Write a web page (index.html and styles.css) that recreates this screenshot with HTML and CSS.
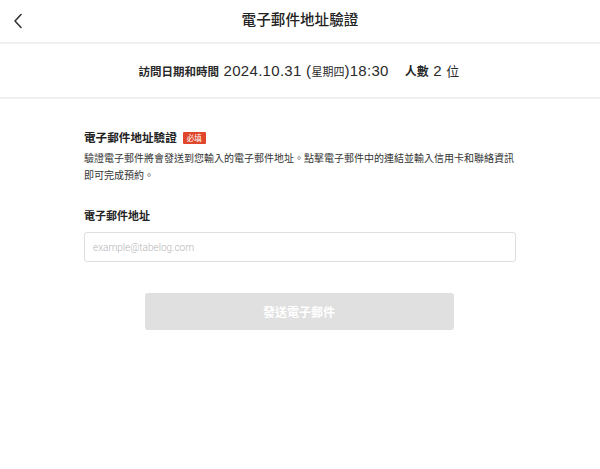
FILE: index.html
```html
<!DOCTYPE html>
<html lang="zh-Hant">
<head>
<meta charset="utf-8">
<title>電子郵件地址驗證</title>
<link rel="stylesheet" href="styles.css">
</head>
<body>
<header class="topbar">
  <button class="back" aria-label="返回">
    <svg width="10" height="16" viewBox="0 0 10 16"><path d="M8 1.5 L2 8 L8 14.5" fill="none" stroke="#333" stroke-width="1.6" stroke-linecap="round" stroke-linejoin="round"/></svg>
  </button>
  <h1 class="title">電子郵件地址驗證</h1>
</header>
<section class="visit">
  <p class="visit-line"><span class="cjk b">訪問日期和時間</span> 2024.10.31 (<span class="cjk wk">星期四</span>)18:30<span class="gap"></span><span class="cjk b ppl">人數</span> 2 <span class="cjk unit">位</span></p>
</section>
<main class="content">
  <div class="sec-head">
    <h2 class="sec-title">電子郵件地址驗證</h2>
    <span class="badge">必填</span>
  </div>
  <p class="desc">驗證電子郵件將會發送到您輸入的電子郵件地址。點擊電子郵件中的連結並輸入信用卡和聯絡資訊即可完成預約。</p>
  <label class="label" for="email">電子郵件地址</label>
  <input class="input" id="email" type="email" placeholder="example@tabelog.com">
  <div class="actions">
    <button class="send" disabled>發送電子郵件</button>
  </div>
</main>
</body>
</html>
```
FILE: styles.css
```css
* { box-sizing: border-box; }
html, body { margin: 0; padding: 0; background: #fff; }
body {
  font-family: "Liberation Sans", "Noto Sans CJK TC", sans-serif;
  color: #222;
  width: 600px;
}
.topbar {
  height: 44px;
  border-bottom: 2px solid #f0f0f0;
  display: flex;
  align-items: center;
  justify-content: center;
  position: relative;
}
.back {
  position: absolute;
  left: 12px;
  top: 12px;
  background: none;
  border: 0;
  padding: 0;
  width: 12px;
  height: 18px;
  display: flex;
  align-items: center;
  justify-content: center;
}
.title {
  margin: -4px 0 0;
  font-family: "Noto Sans CJK TC", sans-serif;
  font-size: 14.6px;
  font-weight: 500;
  line-height: 20px;
  color: #222;
}
.visit {
  height: 55px;
  border-bottom: 2px solid #efefef;
  display: flex;
  align-items: center;
  justify-content: center;
}
.visit-line {
  margin: 0 0 0 -2px;
  font-size: 15px;
  letter-spacing: 0.3px;
  line-height: 20px;
  color: #2a2a2a;
  display: flex;
  align-items: baseline;
  white-space: pre;
}
.cjk {
  font-family: "Noto Sans CJK TC", sans-serif;
  font-size: 11.5px;
  letter-spacing: 0;
}
.wk { font-size: 11px; }
.ppl { font-size: 12px; }
.unit { font-size: 13px; }
.b { font-weight: 700; }
.gap { display: inline-block; width: 16px; }
.content {
  width: 432px;
  margin: 0 auto;
  padding-top: 29px;
  font-family: "Noto Sans CJK TC", sans-serif;
}
.sec-head {
  display: flex;
  align-items: center;
  gap: 6px;
  height: 18px;
}
.sec-title {
  margin: 0;
  font-size: 11.6px;
  font-weight: 700;
  line-height: 18px;
  color: #222;
}
.badge {
  background: #e0462b;
  color: #fff;
  font-size: 7.5px;
  line-height: 11px;
  height: 12px;
  padding: 0 4px;
  border-radius: 1px;
  display: inline-flex;
  align-items: center;
  margin-top: 1px;
}
.desc {
  margin: 3px 0 0;
  font-size: 10px;
  line-height: 17px;
  color: #333;
}
.label {
  display: block;
  margin-top: 23px;
  font-size: 11px;
  font-weight: 700;
  line-height: 18px;
  color: #222;
}
.input {
  display: block;
  width: 100%;
  height: 30px;
  margin-top: 8px;
  border: 1px solid #dedede;
  border-radius: 3px;
  padding: 0 8px;
  font-family: "Roboto", sans-serif;
  font-weight: 300;
  font-size: 10px;
  color: #333;
  background: #fff;
  outline: none;
}
.input::placeholder { color: #b5b5b5; }
.actions {
  display: flex;
  justify-content: center;
  margin-top: 31px;
  padding-right: 2px;
}
.send {
  width: 309px;
  height: 37px;
  border: 0;
  border-radius: 3px;
  background: #e0e0e0;
  color: #fff;
  font-family: "Noto Sans CJK TC", sans-serif;
  font-size: 12px;
  font-weight: 700;
  letter-spacing: 0;
}
```
